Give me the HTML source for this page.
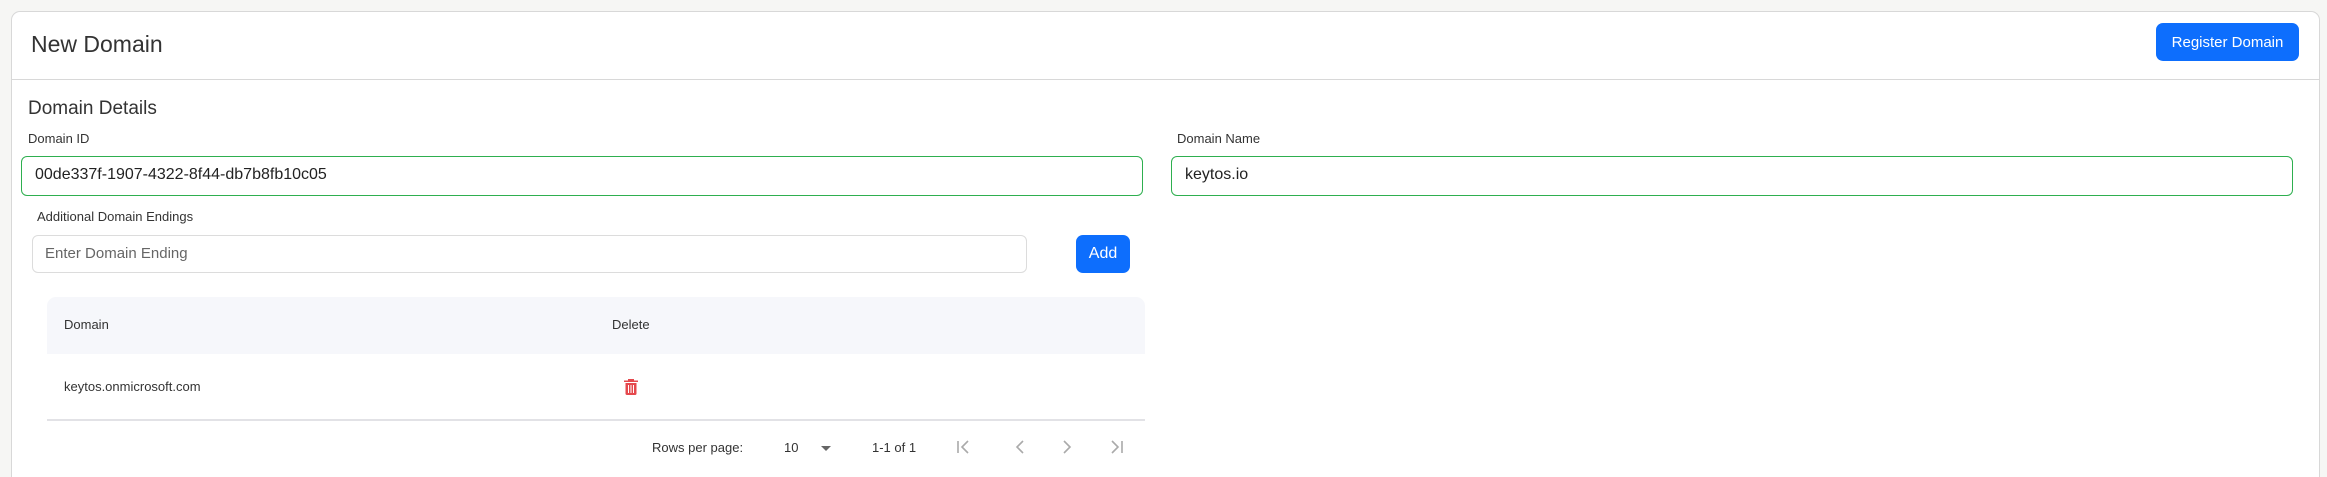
<!DOCTYPE html>
<html style="width:2327px;height:477px;overflow:hidden"><head><style>
*{box-sizing:border-box;margin:0;padding:0}
body{width:2327px;height:477px;overflow:hidden;background:#f6f6f4;font-family:"Liberation Sans",Arial,sans-serif;color:#333;position:relative}
.card{position:absolute;left:11px;top:11px;width:2309px;height:466px;background:#fff;border:1px solid #d8d8d8;border-bottom:none;border-radius:9px 9px 0 0}
.a{position:absolute}
.inp{position:absolute;border-radius:6px;background:#fff}
.btn{position:absolute;background:#0d6efd;color:#fff;border-radius:7px;display:flex;align-items:center;justify-content:center;font-size:16px}
</style></head><body>
<div class="card"></div>
<div class="a" style="left:31px;top:31px;font-size:23px;color:#333">New Domain</div>
<div class="btn" style="left:2156px;top:23px;width:143px;height:38px;font-size:15px">Register Domain</div>
<div class="a" style="left:12px;top:79px;width:2307px;height:1px;background:#d8d8d8"></div>
<div class="a" style="left:28px;top:98px;font-size:19px;color:#333">Domain Details</div>
<div class="a" style="left:28px;top:131px;font-size:13px;color:#333">Domain ID</div>
<div class="inp" style="left:21px;top:156px;width:1122px;height:40px;border:1px solid #2eaf4f"></div>
<div class="a" style="left:35px;top:166px;font-size:16px;color:#222">00de337f-1907-4322-8f44-db7b8fb10c05</div>
<div class="a" style="left:1177px;top:131px;font-size:13px;color:#333">Domain Name</div>
<div class="inp" style="left:1171px;top:156px;width:1122px;height:40px;border:1px solid #2eaf4f"></div>
<div class="a" style="left:1185px;top:166px;font-size:16px;color:#222">keytos.io</div>
<div class="a" style="left:37px;top:209px;font-size:13px;color:#333">Additional Domain Endings</div>
<div class="inp" style="left:32px;top:235px;width:995px;height:38px;border:1px solid #dcdcdc"></div>
<div class="a" style="left:45px;top:245px;font-size:15px;color:#666">Enter Domain Ending</div>
<div class="btn" style="left:1076px;top:235px;width:54px;height:38px">Add</div>
<div class="a" style="left:47px;top:297px;width:1098px;height:57px;background:#f6f7fb;border-radius:9px 9px 0 0"></div>
<div class="a" style="left:64px;top:317px;font-size:13px;color:#333">Domain</div>
<div class="a" style="left:612px;top:317px;font-size:13px;color:#333">Delete</div>
<div class="a" style="left:64px;top:379px;font-size:13px;color:#333">keytos.onmicrosoft.com</div>
<svg class="a" style="left:623px;top:378px" width="16" height="17" viewBox="0 0 16 17"><path d="M5 1h6v1.5h4V4H1V2.5h4z" fill="#e5484d"/><path d="M2.5 5h11v10.5a1.5 1.5 0 0 1-1.5 1.5H4a1.5 1.5 0 0 1-1.5-1.5z" fill="#e5484d"/><path d="M5.5 7v8M8 7v8M10.5 7v8" stroke="#fff" stroke-width="1"/></svg>
<div class="a" style="left:47px;top:419px;width:1098px;height:2px;background:#e2e2e6"></div>
<div class="a" style="left:652px;top:440px;font-size:13px;color:#333">Rows per page:</div>
<div class="a" style="left:784px;top:440px;font-size:13px;color:#333">10</div>
<div class="a" style="left:821px;top:446px;width:0;height:0;border-left:5px solid transparent;border-right:5px solid transparent;border-top:5px solid #666"></div>
<div class="a" style="left:872px;top:440px;font-size:13px;color:#333">1-1 of 1</div>
<svg class="a" style="left:955px;top:438px" width="180" height="18" viewBox="0 0 180 18" fill="none" stroke="#aaa" stroke-width="1.6"><path d="M3 3v12M13 3l-6 6 6 6"/><path d="M68 3l-6 6 6 6"/><path d="M109 3l6 6-6 6"/><path d="M157 3l6 6-6 6M167 3v12"/></svg>
</body></html>
